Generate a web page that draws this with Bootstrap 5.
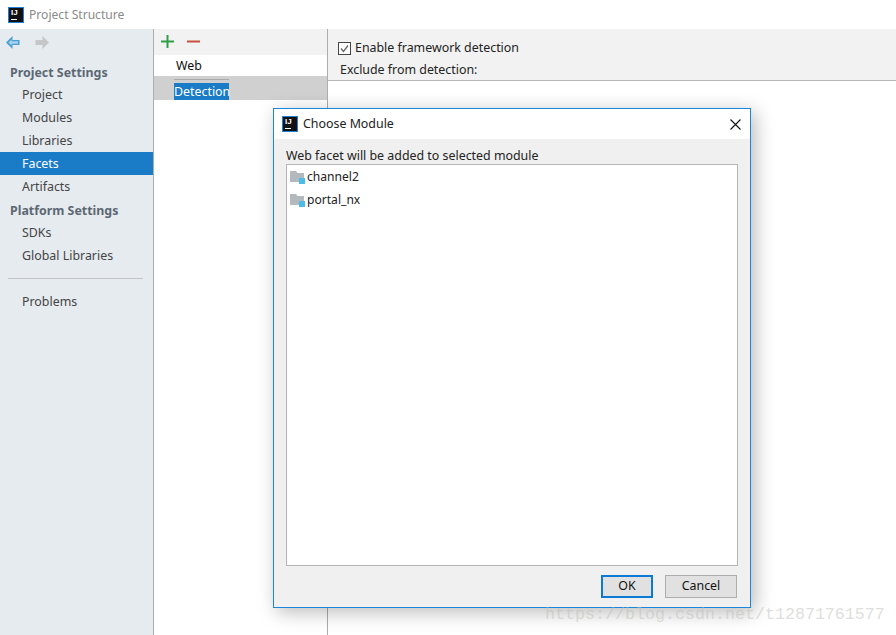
<!DOCTYPE html>
<html lang="en">
<head>
<meta charset="utf-8">
<title>Project Structure</title>
<link href="https://cdn.jsdelivr.net/npm/bootstrap@5.3.0/dist/css/bootstrap.min.css" rel="stylesheet">
<style>
html,body{height:635px;overflow:hidden;margin:0}
body{background:#fff;font-family:"Noto Sans","Noto Sans CJK SC",sans-serif;font-size:12.4px;line-height:23px;color:#222;position:relative}
.ide-title{height:29px;color:#8a8a8a;padding-left:8px;gap:5px;font-size:12.1px}
.ij-logo{width:16px;height:16px;background:#111;border:1px solid #1d7fd6;display:block;flex:none;position:relative;color:#fff;font:bold 8px/8px "Liberation Sans",sans-serif;padding-left:2px;padding-top:1px}
.ij-logo::after{content:"";position:absolute;left:2px;bottom:2px;width:6px;height:1px;background:#fff}
.ide-main{height:606px}
.ide-side{width:154px;background:#e6ebf0;border-right:1px solid #adadad;color:#444}
.side-nav{height:32px;padding:7px 0 0 6px;gap:15px}
.side-head{height:22px;padding:1px 0 0 10px;font-weight:700;color:#5d6873}
.side-head.second{height:23px}
.side-item{height:23px;padding-left:22px}
.side-item.current{background:#1a7bc6;color:#fff}
.side-rule{height:1px;margin:11px 10px 11px 8px;background:#c2c4c6}
.ide-mid{width:174px;border-right:1px solid #adadad}
.mid-tools{height:26px;background:#f2f2f2;padding:0 0 2px 7px;gap:13px}
.mid-web{height:21px;padding-left:22px;line-height:21px;color:#111}
.mid-sel{height:24px;background:#d0d0d0;padding:7px 0 0 20px}
.sel-wrap{position:relative;width:55px}
.sel-wrap::before{content:"";position:absolute;left:0;right:0;top:-4px;height:1px;background:#aaa}
.sel-text{background:#1a7bc6;color:#fff;line-height:17px;height:17px;display:block;white-space:nowrap}
.ide-right{flex:1}
.right-head{height:52px;background:#f2f2f2;border-bottom:1px solid #b8b8b8;padding:11px 0 0 10px;color:#222}
.check-row{height:16px;gap:4px;line-height:16px}
.check-box{width:13px;height:13px;border:1px solid #444;background:#fff;display:block;flex:none}
.excl{padding-left:2px;line-height:16px;margin-top:6px}
.chooser{position:absolute;left:273px;top:108px;width:478px;height:500px;background:#f0f0f0;border:1px solid #1a86dc;box-shadow:4px 4px 18px rgba(0,0,0,.28);display:flex;flex-direction:column}
.chooser-title{height:30px;background:#fff;padding-left:8px;gap:5px;color:#222;flex:none;line-height:16px}
.chooser-x{margin-left:auto;margin-right:9px;display:block}
.chooser-body{padding:9px 12px 0 12px;flex:1;display:flex;flex-direction:column}
.hint{height:16px;line-height:15px;color:#222}
.mod-list{height:402px;background:#fff;border:1px solid #b5b5b5;flex:none}
.mod-row{height:23px;padding-left:3px;gap:2px;color:#222;font-size:12.1px}
.chooser-foot{gap:12px;justify-content:flex-end;padding:9px 1px 0 0}
.win-btn{height:23px;background:#e1e1e1;color:#111;border:1px solid #adadad;font-size:12.4px;line-height:18px;padding:0 0 1px;border-radius:0}
.win-ok{width:52px;border:2px solid #0a7ad6;line-height:16px}
.win-cancel{width:72px}
.mark-text{position:absolute;left:545px;top:605px;font-family:"Liberation Mono",monospace;font-size:16.67px;line-height:20px;color:rgba(190,190,185,.5);white-space:nowrap;pointer-events:none}
</style>
</head>
<body>
<div class="ide-title d-flex align-items-center">
  <span class="ij-logo">IJ</span><span>Project Structure</span>
</div>
<div class="ide-main d-flex">
  <div class="ide-side flex-shrink-0">
    <div class="side-nav d-flex align-items-start">
      <svg width="14" height="13" viewBox="0 0 14 13"><path d="M6.500 0 0 6.500 6.500 13V9h7V4h-7z" fill="#4b9fd5"/><path d="M5.500 3.500 2.500 6.500l3 3V7.800h6.500V5.200H5.500z" fill="#a9d3ec"/></svg>
      <svg width="14" height="13" viewBox="0 0 14 13"><path d="M7.500 0 14 6.500 7.500 13V9H.5V4h7z" fill="#c4c6c8"/></svg>
    </div>
    <div class="side-head d-flex align-items-center">Project Settings</div>
    <div class="side-item">Project</div>
    <div class="side-item">Modules</div>
    <div class="side-item">Libraries</div>
    <div class="side-item current">Facets</div>
    <div class="side-item">Artifacts</div>
    <div class="side-head second d-flex align-items-center">Platform Settings</div>
    <div class="side-item">SDKs</div>
    <div class="side-item">Global Libraries</div>
    <div class="side-rule"></div>
    <div class="side-item">Problems</div>
  </div>
  <div class="ide-mid flex-shrink-0">
    <div class="mid-tools d-flex align-items-center">
      <svg width="13" height="13" viewBox="0 0 13 13"><path d="M5.500 0h2v5.500H13v2H7.500V13h-2V7.500H0v-2h5.500z" fill="#2f9e44"/></svg>
      <svg width="13" height="13" viewBox="0 0 13 13"><path d="M0 5.500h13v2H0z" fill="#c8503f"/></svg>
    </div>
    <div class="mid-web">Web</div>
    <div class="mid-sel"><div class="sel-wrap"><span class="sel-text">Detection</span></div></div>
  </div>
  <div class="ide-right">
    <div class="right-head">
      <div class="check-row d-flex align-items-center">
        <span class="check-box"><svg width="11" height="11" viewBox="0 0 11 11" class="d-block"><path d="M2 5.500l2.500 3L9 2.500" fill="none" stroke="#666" stroke-width="1.300"/></svg></span>
        <span>Enable framework detection</span>
      </div>
      <div class="excl">Exclude from detection:</div>
    </div>
  </div>
</div>

<div class="chooser">
  <div class="chooser-title d-flex align-items-center">
    <span class="ij-logo">IJ</span><span>Choose Module</span>
    <svg class="chooser-x" width="11" height="11" viewBox="0 0 11 11"><path d="M.5.500l10 10M10.500.500l-10 10" stroke="#111" stroke-width="1.100" fill="none"/></svg>
  </div>
  <div class="chooser-body">
    <div class="hint">Web facet will be added to selected module</div>
    <div class="mod-list">
      <div class="mod-row d-flex align-items-center">
        <svg width="15" height="14" viewBox="0 0 15 14"><path d="M0 1h6l1.500 2H14v9H0z" fill="#b4b9be"/><path d="M9 8h6v6H9z" fill="#4cbde8"/></svg><span>channel2</span>
      </div>
      <div class="mod-row d-flex align-items-center">
        <svg width="15" height="14" viewBox="0 0 15 14"><path d="M0 1h6l1.500 2H14v9H0z" fill="#b4b9be"/><path d="M9 8h6v6H9z" fill="#4cbde8"/></svg><span>portal_nx</span>
      </div>
    </div>
    <div class="chooser-foot d-flex">
      <button type="button" class="btn win-btn win-ok">OK</button>
      <button type="button" class="btn win-btn win-cancel">Cancel</button>
    </div>
  </div>
</div>
<div class="mark-text">https://blog.csdn.net/t12871761577</div>
<script src="https://cdn.jsdelivr.net/npm/bootstrap@5.3.0/dist/js/bootstrap.bundle.min.js"></script>
</body>
</html>
